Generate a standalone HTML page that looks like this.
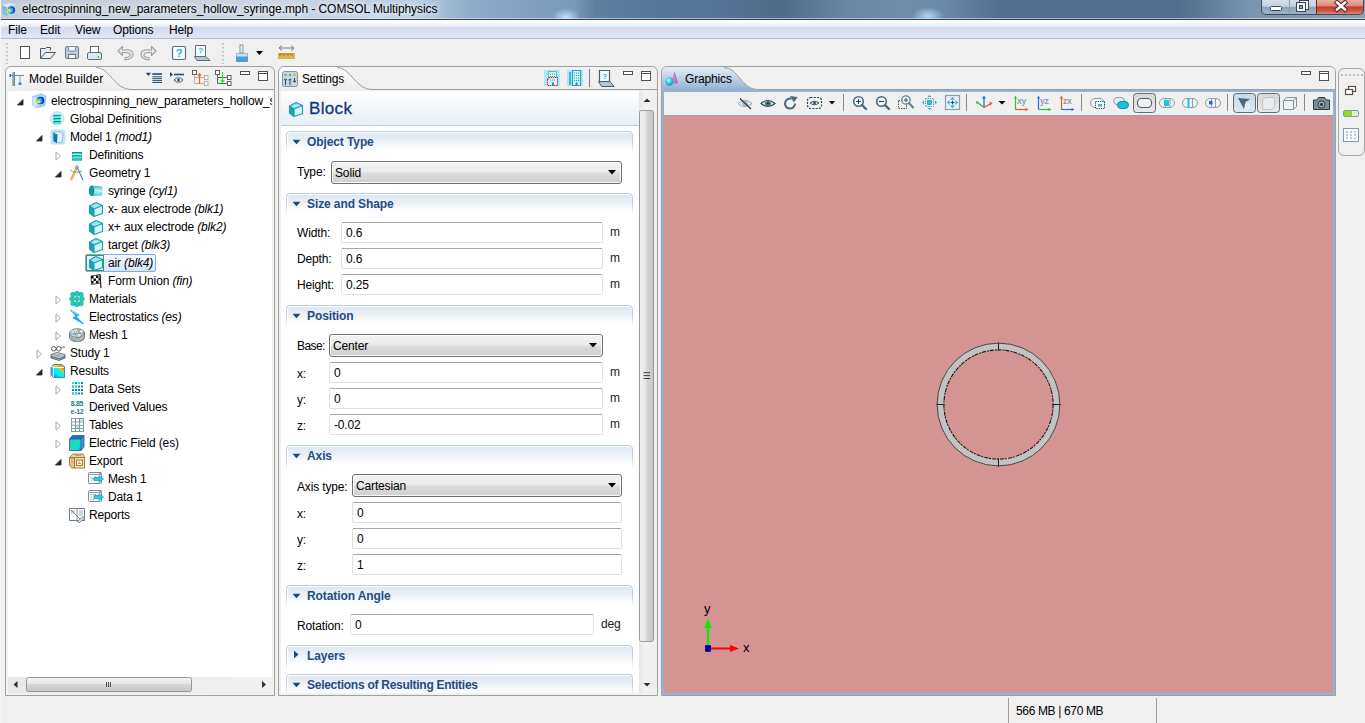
<!DOCTYPE html>
<html><head><meta charset="utf-8">
<style>
*{margin:0;padding:0;box-sizing:border-box}
html,body{width:1365px;height:723px;overflow:hidden;background:#f0f0f0;font-family:"Liberation Sans",sans-serif;font-size:12px;color:#000;line-height:1;letter-spacing:-0.15px}
.a{position:absolute}
svg{position:absolute;overflow:visible}
#title{left:0;top:0;width:1365px;height:19px;background:radial-gradient(14px 9px at 566px 17px,rgba(190,225,255,.95),rgba(190,225,255,0)),radial-gradient(16px 9px at 928px 16px,rgba(180,220,250,.9),rgba(180,220,250,0)),radial-gradient(30px 10px at 380px 18px,rgba(200,225,245,.6),rgba(200,225,245,0)),linear-gradient(90deg,#c0cad6 0,#c8d4e2 280px,#b8cbe0 420px,#8eaccb 470px,#7f9fc0 540px,#7898b8 575px,#5e80a2 595px,#56789a 650px,#55759a 720px,#4f6a88 780px,#6a88a6 850px,#6f8dab 900px,#6a8aaa 945px,#506e8e 1000px,#506e8e 1180px,#7a94ae 1250px,#8aa2ba 1365px)}
#titletext{left:22px;top:3px;font-size:12px;letter-spacing:-0.07px;color:#000;text-shadow:0 0 6px #fff,0 0 10px #fff}
#titleline{left:0;top:19px;width:1365px;height:1px;background:#3a4656}
#menubar{left:0;top:20px;width:1365px;height:19px;background:linear-gradient(#fff 0,#fbfcfe 12%,#eef1f8 28%,#e6eaf5 36%,#d5dbed 40%,#d8def0 60%,#e0e6f5 100%);border-bottom:1px solid #b6bccc}
.menu{top:4px;font-size:12px}
.wb{top:0;height:15px;border:1px solid #3e4b5c;border-top:none}
.panel{border:1px solid #a0a0a0;border-radius:6px 6px 0 0;background:#f0f0f0}
.content{background:#fff}
.tbsep{width:1px;background:#a8a8a8}
.grip{width:2px;background:repeating-linear-gradient(#c4c4c4 0 1px,#d8d8d8 1px 2px,transparent 2px 4px)}
.tr{white-space:nowrap}
i{font-style:italic}
.sec{left:286px;width:347px;height:24px;border:1px solid #b9cfe6;border-bottom:none;border-radius:4px 4px 0 0;box-shadow:inset 1px 1px 0 #fff;background:linear-gradient(#dde6f2,#fff 95%);-webkit-mask-image:linear-gradient(#000 40%,transparent)}
.sect{font-weight:bold;color:#1f4c85;white-space:nowrap}
.inp{height:21px;border:1px solid #dde2ea;border-top-color:#a6a8ac;border-radius:2px;background:#fff}
.inp span{position:absolute;left:4px;top:4px;white-space:nowrap}
.combo span{position:absolute;left:3px;top:5px;white-space:nowrap}
.combo{height:23px;border:1px solid #707070;border-radius:3px;box-shadow:inset 0 0 0 1px rgba(255,255,255,.85);background:linear-gradient(#f2f2f2 0,#ebebeb 48%,#dddddd 52%,#cfcfcf 100%)}
.unit{font-size:12px;color:#222;white-space:nowrap}
.status{top:705px;font-size:12px}
</style></head><body>

<svg width="0" height="0" style="position:absolute">
<defs>
 <linearGradient id="gCyan" x1="0" y1="0" x2="0" y2="1"><stop offset="0" stop-color="#dff7fb"/><stop offset="1" stop-color="#aee6ef"/></linearGradient>
 <linearGradient id="gBlue" x1="0" y1="0" x2="1" y2="1"><stop offset="0" stop-color="#1d8fd0"/><stop offset="1" stop-color="#0a5fa8"/></linearGradient>
 <linearGradient id="gRain" x1="0" y1="1" x2="1" y2="0"><stop offset="0" stop-color="#2a6ae0"/><stop offset="0.4" stop-color="#18c8e8"/><stop offset="0.7" stop-color="#f0d020"/><stop offset="1" stop-color="#e83010"/></linearGradient>
 <linearGradient id="gEF" x1="0" y1="0" x2="1" y2="1"><stop offset="0" stop-color="#10c8f0"/><stop offset="0.5" stop-color="#20e0b0"/><stop offset="0.75" stop-color="#10d8e0"/><stop offset="1" stop-color="#2080e0"/></linearGradient>
 <symbol id="i-blk" viewBox="0 0 16 16">
  <path d="M1.5 5 L8 1.5 L14.5 4.5 L6 8 Z" fill="#9fe6ee"/>
  <path d="M6 8 L14.5 4.5 V12.5 L6 15.5 Z" fill="#d6f7fa"/>
  <path d="M1.5 5 L6 8 V15.5 L1.5 12 Z" fill="#1aa3b4"/>
  <path d="M1.5 5 L8 1.5 L14.5 4.5 V12.5 L6 15.5 L1.5 12 Z M1.5 5 L6 8 L14.5 4.5 M6 8 V15.5" fill="none" stroke="#17a0b2" stroke-width="1.1" stroke-linejoin="round"/>
 </symbol>
 <symbol id="i-cyl" viewBox="0 0 16 16">
  <defs><linearGradient id="gCyl" x1="0" y1="0" x2="0" y2="1"><stop offset="0" stop-color="#22bccd"/><stop offset="0.5" stop-color="#c8f6fa"/><stop offset="1" stop-color="#3cc8d8"/></linearGradient></defs>
  <path d="M3.5 2.5 L14 3.5 Q15.5 7.5 14 12.5 L3.5 13 Z" fill="url(#gCyl)"/>
  <ellipse cx="3.6" cy="7.8" rx="2.8" ry="5.2" fill="#1296a8"/>
 </symbol>
 <symbol id="i-gdef" viewBox="0 0 16 16">
  <circle cx="7.2" cy="7.5" r="6.8" fill="#d2eef0" stroke="#b4dcdf" stroke-width="0.8"/>
  <g><rect x="3.5" y="3.8" width="7.5" height="2.3" fill="#0a8a80"/><rect x="4.3" y="4.8" width="6" height="1.3" fill="#10f4ec"/><rect x="10.3" y="4.8" width="0.8" height="1.3" fill="#fff"/></g>
  <g><rect x="3.5" y="6.9" width="7.5" height="2.3" fill="#0a8a80"/><rect x="4.3" y="7.9" width="6" height="1.3" fill="#10f4ec"/><rect x="10.3" y="7.9" width="0.8" height="1.3" fill="#fff"/></g>
  <g><rect x="3.5" y="10" width="7.5" height="2.3" fill="#0a8a80"/><rect x="4.3" y="11" width="6" height="1.3" fill="#10f4ec"/><rect x="10.3" y="11" width="0.8" height="1.3" fill="#fff"/></g>
 </symbol>
 <symbol id="i-defs" viewBox="0 0 16 16">
  <g><rect x="3" y="5" width="10" height="2.2" fill="#0a8a80"/><rect x="3.8" y="6" width="8.6" height="1.2" fill="#10f4ec"/></g>
  <g><rect x="3" y="8.2" width="10" height="2.2" fill="#0a8a80"/><rect x="3.8" y="9.2" width="8.6" height="1.2" fill="#10f4ec"/></g>
  <g><rect x="3" y="11.4" width="10" height="2.2" fill="#0a8a80"/><rect x="3.8" y="12.4" width="8.6" height="1.2" fill="#10f4ec"/></g>
 </symbol>
 <symbol id="i-model" viewBox="0 0 16 16">
  <rect x="0.5" y="0.5" width="15" height="15" rx="2" fill="#bfe6f8"/>
  <path d="M3 3.5 L9 2.5 L13 4.5 L12 13 L7 14 L3.5 12 Z" fill="#e6f4fb" stroke="#5aa0d0" stroke-width="0.6"/>
  <path d="M3 3.5 L7.5 5.5 L7 14 L3.5 12 Z" fill="url(#gBlue)"/>
 </symbol>
 <symbol id="i-mph" viewBox="0 0 16 16">
  <path d="M1.5 3.5 L10 1 L15 3 L14 12.5 L6 15 L1.5 12 Z" fill="#a8d4f0" stroke="#7ab0d8" stroke-width="0.6"/>
  <path d="M1.5 3.5 L6 5.5 L6 15 L1.5 12 Z" fill="#cfe6f6"/>
  <ellipse cx="9.5" cy="7.5" rx="3.8" ry="3.8" fill="#0c2bd0"/>
  <ellipse cx="8.6" cy="7.8" rx="2.8" ry="3" fill="#10b8e8"/>
  <ellipse cx="7.4" cy="8.4" rx="1.8" ry="1.9" fill="#d8e030"/>
 </symbol>
 <symbol id="i-geom" viewBox="0 0 16 16">
  <path d="M8 2 L14 15" stroke="#6a8a9a" stroke-width="1.3"/>
  <path d="M8 2 L2 15" stroke="#d8a030" stroke-width="2.2"/>
  <path d="M8 2 L2 15" stroke="#f2d080" stroke-width="0.8"/>
  <circle cx="8" cy="2.3" r="1.4" fill="none" stroke="#6a8a9a"/>
  <path d="M1 5 Q5 9 13 6" fill="none" stroke="#6a8a9a" stroke-width="0.8"/>
 </symbol>
 <symbol id="i-flag" viewBox="0 0 16 16">
  <path d="M3 3 L12 1.5 L12.5 10 L3.5 11.5 Z" fill="#fff" stroke="#222" stroke-width="0.8"/>
  <path d="M3 3 h2.5 v2.5 h-2.5z M8 2.5 h2.5 v2.5 h-2.5z M5.5 5.5 h2.5 v2.5 h-2.5z M10.5 5 h2 v2.5 h-2z M3.3 8 h2.2 v2.5 h-2.2z M8 7.8 h2.5 v2.5 h-2.5z" fill="#111"/>
  <path d="M12 1.5 L13 15" stroke="#222" stroke-width="1.2"/>
 </symbol>
 <symbol id="i-mat" viewBox="0 0 16 16">
  <g fill="#22c8d8" stroke="#0a9aaa" stroke-width="0.6">
  <circle cx="4" cy="3.5" r="2.3"/><circle cx="8" cy="2.5" r="2.3"/><circle cx="12" cy="3.5" r="2.3"/>
  <circle cx="3" cy="8" r="2.3"/><circle cx="8" cy="8" r="2.3"/><circle cx="13" cy="8" r="2.3"/>
  <circle cx="4" cy="12.5" r="2.3"/><circle cx="8" cy="13.5" r="2.3"/><circle cx="12" cy="12.5" r="2.3"/>
  </g>
  <g fill="#40e010"><circle cx="3" cy="5.5" r="1.1"/><circle cx="8" cy="5" r="1.1"/><circle cx="13" cy="5.5" r="1.1"/><circle cx="3" cy="10.5" r="1.1"/><circle cx="8" cy="10.5" r="1.1"/><circle cx="13" cy="10.5" r="1.1"/><circle cx="8" cy="15" r="1"/></g>
 </symbol>
 <symbol id="i-es" viewBox="0 0 16 16">
  <path d="M1.5 1 L10 6 L7 7.5 L14.5 15 L4 8.8 L7.2 7.2 Z" fill="#c8f4ff" stroke="#c8f4ff" stroke-width="2" opacity="0.6"/>
  <path d="M1.5 1 L10 6 L7 7.5 L14.5 15 L4 8.8 L7.2 7.2 Z" fill="#14a8f0" stroke="#14a8f0" stroke-width="0.8" stroke-linejoin="round"/>
  <path d="M2.5 1.8 L8.5 5.8" stroke="#a8e8ff" stroke-width="0.8"/>
 </symbol>
 <symbol id="i-mesh" viewBox="0 0 16 16">
  <path d="M0.5 6 V10 Q0.5 14.5 8 14.5 Q15.5 14.5 15.5 10 V6 Z" fill="#b4c0c4" stroke="#5a6e76" stroke-width="0.8"/>
  <ellipse cx="8" cy="6" rx="7.5" ry="4.3" fill="#e0e6e8" stroke="#5a6e76" stroke-width="0.8"/>
  <path d="M1.5 5 L5 8.5 L9 2.5 L12.5 9 L15 4.5 M4 2.5 L7.5 9.5 L11 2 M1 7 L15 6 M2 10 L5 14 L9 10.5 L12 14 L14.5 11" fill="none" stroke="#6a7e86" stroke-width="0.6"/>
 </symbol>
 <symbol id="i-study" viewBox="0 0 16 16">
  <circle cx="3.8" cy="3.8" r="2.3" fill="#fff" stroke="#3e525e" stroke-width="0.9"/>
  <circle cx="8.8" cy="3.8" r="2.3" fill="#fff" stroke="#3e525e" stroke-width="0.9"/>
  <path d="M6.1 3.8 H6.5 M11.1 3.3 Q12.5 1 15 2.2" fill="none" stroke="#3e525e" stroke-width="0.9"/>
  <path d="M1 9.5 L7 7.5 L15 9.5 L9 12 Z" fill="#e6ecee" stroke="#3e525e" stroke-width="0.8"/>
  <path d="M1 9.5 V11.5 L9 14 L15 11.5 V9.5 M1 11.5 V13 L9 15.5 L15 13 V11.5" fill="#aebcc2" stroke="#3e525e" stroke-width="0.8"/>
  <path d="M3 9.5 L9 11 M5 8.8 L11 10.3" stroke="#8a9aa2" stroke-width="0.5"/>
 </symbol>
 <symbol id="i-results" viewBox="0 0 16 16">
  <defs><linearGradient id="gRF" x1="0" y1="1" x2="1" y2="0"><stop offset="0" stop-color="#1a78f0"/><stop offset="0.35" stop-color="#00f0f0"/><stop offset="0.6" stop-color="#20e8e0"/><stop offset="0.8" stop-color="#f8c010"/><stop offset="1" stop-color="#f02010"/></linearGradient>
  <linearGradient id="gRT" x1="0" y1="0" x2="1" y2="0"><stop offset="0" stop-color="#f8f020"/><stop offset="1" stop-color="#f88010"/></linearGradient></defs>
  <path d="M1 4 L3.5 1.5 H12 L14.5 4 Z" fill="url(#gRT)"/>
  <path d="M1 4 L3.5 4.5 V14.5 L1 12 Z" fill="#20b8f0"/>
  <rect x="3.5" y="4.5" width="11" height="10" fill="url(#gRF)"/>
  <path d="M1 4 L3.5 1.5 H12 L14.5 4 V14.5 H3.5 L1 12 Z" fill="none" stroke="#2a90d8" stroke-width="1" stroke-linejoin="round"/>
  <path d="M1.5 3.5 L3.5 4.5 H14 M3.5 4.5 V14" fill="none" stroke="#fff" stroke-width="0.9"/>
 </symbol>
 <symbol id="i-datasets" viewBox="0 0 16 16">
  <g fill="#0a8aa8"><rect x="3" y="1" width="2" height="2"/><rect x="6" y="1" width="2" height="2"/><rect x="9" y="1" width="2" height="2"/><rect x="12" y="1" width="2" height="2"/>
  <rect x="3" y="4.5" width="2" height="2"/><rect x="6" y="4.5" width="2" height="2"/><rect x="9" y="4.5" width="2" height="2"/><rect x="12" y="4.5" width="2" height="2"/>
  <rect x="3" y="8" width="2" height="2"/><rect x="6" y="8" width="2" height="2"/><rect x="9" y="8" width="2" height="2"/><rect x="12" y="8" width="2" height="2"/>
  <rect x="3" y="11.5" width="2" height="2"/><rect x="6" y="11.5" width="2" height="2"/><rect x="9" y="11.5" width="2" height="2"/><rect x="12" y="11.5" width="2" height="2"/></g>
  <g fill="#19e8e8"><rect x="3" y="1" width="2" height="2"/><rect x="3" y="4.5" width="2" height="2"/><rect x="6" y="4.5" width="2" height="2"/><rect x="3" y="11.5" width="2" height="2"/><rect x="6" y="11.5" width="2" height="2"/><rect x="9" y="1" width="2" height="2"/></g>
 </symbol>
 <symbol id="i-derived" viewBox="0 0 16 16">
  <text x="8" y="6.8" font-size="7" font-weight="bold" fill="#10808a" text-anchor="middle" font-family="Liberation Sans" letter-spacing="-0.3">8.85</text>
  <text x="8" y="14.5" font-size="7" font-weight="bold" fill="#10808a" text-anchor="middle" font-family="Liberation Sans" letter-spacing="-0.3">e-12</text>
 </symbol>
 <symbol id="i-tables" viewBox="0 0 16 16">
  <rect x="2.5" y="1.5" width="12" height="13" fill="#fff" stroke="#8a9aa2"/>
  <path d="M2.5 5 H14.5 M2.5 8.3 H14.5 M2.5 11.5 H14.5 M6.5 1.5 V14.5 M10.5 1.5 V14.5" stroke="#8a9aa2"/>
  <rect x="11" y="2" width="3" height="2.5" fill="#a8e8f8"/><rect x="7" y="8.8" width="3" height="2.3" fill="#a8e8f8"/>
 </symbol>
 <symbol id="i-efield" viewBox="0 0 16 16">
  <path d="M0.5 4 L3.5 0.5 H15 L12 4 Z" fill="#1a6ae8"/>
  <path d="M12 4 L15 0.5 V12 L12 15.5 Z" fill="#3a9ad8"/>
  <path d="M0.5 4 H12 V15.5 H0.5 Z" fill="url(#gEF)"/>
  <path d="M0.5 4 L3.5 0.5 H15 V12 L12 15.5 H0.5 Z M0.5 4 H12 L15 0.5 M12 4 V15.5" fill="none" stroke="#3a5a78" stroke-width="0.8"/>
 </symbol>
 <symbol id="i-export" viewBox="0 0 16 16">
  <path d="M0.5 4.5 L4 1 H14 L15.5 4.5 Z" fill="#ecd6a6" stroke="#9a7630" stroke-width="0.9" stroke-linejoin="round"/>
  <path d="M0.5 4.5 H5.5 V15 H3 L0.5 12 Z" fill="#e4c68a" stroke="#9a7630" stroke-width="0.9" stroke-linejoin="round"/>
  <rect x="5.5" y="4.5" width="10" height="10.5" fill="#f2e0b8" stroke="#9a7630" stroke-width="0.9"/>
  <rect x="7.5" y="7" width="6" height="5.5" fill="#fff4dc" stroke="#9a7630" stroke-width="0.9"/>
  <path d="M9 10.5 H12 M9 9 H11" stroke="#9a7630" stroke-width="0.7"/>
  <path d="M2 6 L4 5.5 M2 9 L4 8.5 M6 2.5 L12 2.5" stroke="#9a7630" stroke-width="0.6"/>
 </symbol>
 <symbol id="i-expm" viewBox="0 0 16 16">
  <rect x="0.5" y="1.5" width="13" height="11" rx="1" fill="#f4f8fa" stroke="#6a8090" stroke-width="0.9"/>
  <path d="M0.5 3.5 H13.5" stroke="#8aa4b4" stroke-width="1"/>
  <circle cx="12" cy="2" r="0.9" fill="#f05030"/>
  <path d="M2 6 L5 8 L8 5 M2.5 10 L6 7.5" stroke="#8a9aa2" stroke-width="0.6" fill="none"/>
  <path d="M6 6.5 H11 V4.5 L15.5 8 L11 11.5 V9.5 H6 Z" fill="#22d0e0" stroke="#0a8aa0" stroke-width="0.6"/>
 </symbol>
 <symbol id="i-expd" viewBox="0 0 16 16">
  <rect x="0.5" y="1.5" width="13" height="11" rx="1" fill="#f4f8fa" stroke="#6a8090" stroke-width="0.9"/>
  <path d="M0.5 3.5 H13.5" stroke="#8aa4b4" stroke-width="1"/>
  <circle cx="12" cy="2" r="0.9" fill="#f05030"/>
  <path d="M2.5 5.5 h1 M2.5 8 h1 M2.5 10.5 h1" stroke="#60c020"/>
  <path d="M5 5.5 h1 M7 5.5 h1 M5 10.5 h1" stroke="#8a9aa2"/>
  <path d="M6 6.5 H11 V4.5 L15.5 8 L11 11.5 V9.5 H6 Z" fill="#22d0e0" stroke="#0a8aa0" stroke-width="0.6"/>
 </symbol>
 <symbol id="i-reports" viewBox="0 0 16 16">
  <path d="M0.5 1.5 H7.5 L8 2.5 L8.5 1.5 H15.5 V13.5 H8.5 L8 14.5 L7.5 13.5 H0.5 Z" fill="#fff" stroke="#5a7080" stroke-width="0.9"/>
  <path d="M8 2.5 V14" stroke="#5a7080" stroke-width="0.7"/>
  <path d="M10 4 H14 M10 6 H14 M10 8 H14 M2 4 H6 M2 6 H5" stroke="#7a8a92" stroke-width="0.7"/>
  <path d="M2 3 L12.5 13.5" stroke="#5a7080" stroke-width="0.8"/>
  <path d="M8.5 14.5 L14 9.5 L15.5 11 L10 16 Z" fill="#e8eef0" stroke="#5a7080" stroke-width="0.8"/>
 </symbol>
</defs>
</svg>
<!-- TITLE BAR -->
<div id="title" class="a"></div>
<svg style="left:1px;top:2px" width="16" height="15" viewBox="0 0 16 15">
 <path d="M1 3 L9.5 1 L15 2.5 L14 11.5 L6.5 14.5 L2 12 Z" fill="#b4d8f0"/>
 <path d="M1 3 L5.5 5 L6.5 14.5 L2 12 Z" fill="#7ab8e0"/>
 <path d="M1 3 L9.5 1 L15 2.5 L5.5 5 Z" fill="#d8ecf8"/>
 <ellipse cx="10.5" cy="8" rx="3.6" ry="3.8" fill="#1838d0"/>
 <ellipse cx="9.6" cy="8.2" rx="2.6" ry="2.9" fill="#10c0e8"/>
 <ellipse cx="8.4" cy="8.6" rx="1.6" ry="1.8" fill="#e8e040"/>
 <circle cx="5" cy="10" r="1.2" fill="#d8c840"/>
</svg>
<div id="titletext" class="a">electrospinning_new_parameters_hollow_syringe.mph - COMSOL Multiphysics</div>
<div class="a wb" style="left:1261px;width:29px;border-radius:0 0 0 5px;background:linear-gradient(#d5dfe9 0,#c3cfdc 45%,#8fa3b8 50%,#9fb2c6 100%)"></div>
<div class="a wb" style="left:1289px;width:28px;border-left-color:#8a9aab;background:linear-gradient(#d5dfe9 0,#c3cfdc 45%,#8fa3b8 50%,#9fb2c6 100%)"></div>
<div class="a wb" style="left:1316px;width:48px;border-radius:0 0 5px 0;border-left-color:#6a2a20;background:linear-gradient(#eab0a4 0,#dc8a78 40%,#c7402c 50%,#cf5a44 80%,#e08a74 100%)"></div>
<svg style="left:1261px;top:0" width="104" height="16" viewBox="0 0 104 16">
 <rect x="9.5" y="6.5" width="11" height="4" rx="1" fill="#fff" stroke="#3a4656" stroke-width="1"/>
 <rect x="38.5" y="0.5" width="9" height="9" fill="#f4f4f4" stroke="#3a4656"/>
 <rect x="35.5" y="2.5" width="9" height="9" fill="#f4f4f4" stroke="#3a4656"/>
 <rect x="38.5" y="5.5" width="3" height="3" fill="#8fa3b8" stroke="#3a4656"/>
 <path d="M76 2.5 L84 9.5 M84 2.5 L76 9.5" stroke="#4a2a2a" stroke-width="4.6" stroke-linecap="square"/>
 <path d="M76 2.5 L84 9.5 M84 2.5 L76 9.5" stroke="#fff" stroke-width="2.6" stroke-linecap="square"/>
</svg>
<div class="a" style="left:0;top:18px;width:1365px;height:1px;background:rgba(230,238,246,.55)"></div>
<div id="titleline" class="a"></div>

<!-- MENU BAR -->
<div id="menubar" class="a">
 <span class="a menu" style="left:8px">File</span>
 <span class="a menu" style="left:40px">Edit</span>
 <span class="a menu" style="left:75px">View</span>
 <span class="a menu" style="left:113px">Options</span>
 <span class="a menu" style="left:169px">Help</span>
</div>

<!-- MAIN TOOLBAR -->
<div class="a grip" style="left:6px;top:43px;height:21px"></div>
<svg style="left:0;top:39px" width="310" height="27" viewBox="0 0 310 27">
 <!-- new -->
 <rect x="20.5" y="7.5" width="9" height="12" fill="#fff" stroke="#555"/>
 <!-- open -->
 <path d="M40.5 19.5 V9.5 H45.5 L46.5 8.5 H50.5 V11.5" fill="#dfe9f5" stroke="#555"/>
 <path d="M40.5 19.5 L45.5 13.5 H55.5 L50.5 19.5 Z" fill="#eaf2fb" stroke="#555"/>
 <!-- save -->
 <rect x="65.5" y="7.5" width="13" height="12" rx="1.5" fill="#b4cfe6" stroke="#707878"/>
 <rect x="68.5" y="7.5" width="7" height="4.5" fill="#eef4fa" stroke="#8a9090"/>
 <rect x="68.5" y="15.5" width="7" height="4" fill="#f6f6f6" stroke="#707878"/>
 <!-- print -->
 <rect x="90.5" y="7.5" width="8" height="6" fill="#fff" stroke="#5a6e80"/>
 <rect x="87.5" y="13.5" width="14" height="7" rx="1.5" fill="#dfe8ef" stroke="#5a6e80"/>
 <circle cx="98.5" cy="18" r="0.9" fill="#2ec02e"/>
 <!-- undo -->
 <path d="M125 21 Q133.5 20 133 14.5 Q132 10 124.5 11 H122.5 V7.5 L118 12 L122.5 16.5 V13.5 H125 Q130 13.5 130 16 Q130 18.5 125 18.5 Z" fill="#e8e8e8" stroke="#a0a0a0" stroke-width="1.1" stroke-linejoin="round"/>
 <!-- redo -->
 <path d="M149 21 Q140.5 20 141 14.5 Q142 10 149.5 11 H151.5 V7.5 L156 12 L151.5 16.5 V13.5 H149 Q144 13.5 144 16 Q144 18.5 149 18.5 Z" fill="#e8e8e8" stroke="#a0a0a0" stroke-width="1.1" stroke-linejoin="round"/>
 <!-- help -->
 <rect x="172.5" y="7.5" width="13" height="13" rx="1.5" fill="#f6fafd" stroke="#5a6e80" stroke-width="1.2"/>
 <text x="179" y="18" font-size="11" font-weight="bold" fill="#10b8c8" text-anchor="middle" font-family="Liberation Sans">?</text>
 <!-- laptop help -->
 <path d="M195.5 6.5 H205.5 V17.5 H195.5 Z" fill="#f6fafd" stroke="#5a6e80"/>
 <text x="200.5" y="14" font-size="8" font-weight="bold" fill="#10b8c8" text-anchor="middle" font-family="Liberation Sans">?</text>
 <path d="M194.5 17.5 L197 21.5 H210 L206 17.5 Z" fill="#b8c4cc" stroke="#5a6e80"/>
 <!-- brush -->
 <rect x="240" y="6" width="3" height="8" fill="#e8eef2" stroke="#6a8090" stroke-width="0.8"/>
 <path d="M236.5 14.5 H247.5 V22.5 H236.5 Z" fill="#3aa2e8" stroke="#6a8090" stroke-width="0.8"/>
 <path d="M236.5 14.5 H247.5 V17.5 H236.5 Z" fill="#d0e2ee"/>
 <path d="M256 12 H263 L259.5 16 Z" fill="#000"/>
 <!-- ruler -->
 <path d="M279 9 H294 M279 9 L282 6.5 M279 9 L282 11.5 M294 9 L291 6.5 M294 9 L291 11.5" stroke="#6a8090" stroke-width="1" fill="none"/>
 <rect x="278" y="14" width="17" height="6" fill="#dbb64a"/>
 <path d="M280 14 V17 M282 14 V16 M284 14 V17 M286 14 V16 M288 14 V17 M290 14 V16 M292 14 V17" stroke="#8a6a20" stroke-width="0.8"/>
</svg>
<div class="a grip" style="left:222px;top:43px;height:21px"></div>

<!-- RIGHT TRIM STACK -->
<div class="a" style="left:1338px;top:68px;width:27px;height:88px;border:1px solid #a8a8a8;border-radius:6px;background:#f0f0f0"></div>
<div class="a" style="left:1341px;top:74px;width:22px;height:2px;background:repeating-linear-gradient(90deg,#c0c0c0 0 2px,transparent 2px 4px)"></div>
<svg style="left:1339px;top:68px" width="25" height="108" viewBox="0 0 25 108">
 <rect x="9.5" y="18.5" width="7" height="5" fill="#fff" stroke="#5a5048" stroke-width="1.2"/>
 <rect x="6.5" y="21.5" width="7" height="5" fill="#fff" stroke="#5a5048" stroke-width="1.2"/>
 <rect x="4.5" y="42.5" width="15" height="6" rx="1.5" fill="#e8f0f6" stroke="#7a98b0"/>
 <rect x="5" y="43" width="8" height="5" fill="#8ed200"/>
 <path d="M7 43 V48 M9 43 V48 M11 43 V48 M15 43 V48 M17 43 V48" stroke="#c8e880" stroke-width="0.5"/>
 <rect x="4.5" y="60.5" width="15" height="13" fill="#fff" stroke="#7a98b0"/>
 <path d="M7 64 H9 M11 64 H13 M15 64 H17 M7 67 H9 M11 67 H13 M15 67 H17 M7 70 H9 M11 70 H13 M15 70 H17" stroke="#7a98b0"/>
</svg>

<div class="a" style="left:0;top:0;width:1px;height:723px;background:#f4f7fa"></div>
<!-- STATUS BAR -->
<div class="a" style="left:1008px;top:698px;width:1px;height:25px;background:#a0a0a0"></div>
<div class="a" style="left:1156px;top:698px;width:1px;height:25px;background:#a0a0a0"></div>
<div class="a status" style="left:1016px;letter-spacing:-0.35px">566 MB | 670 MB</div>

<!-- PANELS -->
<!-- MODEL BUILDER -->
<div class="a" style="left:5px;top:66px;width:270px;height:630px;border:1px solid #a0a0a0;border-radius:6px 6px 0 0;background:#f0f0f0;overflow:hidden">
 <svg style="left:0;top:0" width="268" height="25" viewBox="0 0 268 25">
  <defs><linearGradient id="gTab" x1="0" y1="0" x2="0" y2="1"><stop offset="0" stop-color="#fdfdfd"/><stop offset="1" stop-color="#ececec"/></linearGradient></defs>
  <path d="M0 6 Q0 0 6 0 H90 C104 0 108 22 125 22.5 H268 V25 H0 Z" fill="url(#gTab)"/>
  <path d="M90 0.5 C104 0.5 108 22.5 125 22.5 H268" fill="none" stroke="#a0a0a0" stroke-width="1"/>
 </svg>
 <div class="a" style="left:2px;top:24px;width:264px;height:586px;background:#fff"></div>
</div>
<svg style="left:9px;top:71px" width="16" height="16" viewBox="0 0 16 16">
 <path d="M1 4.5 H15" stroke="#6a8898" stroke-width="1"/>
 <rect x="0.5" y="3" width="1.5" height="3" fill="#4a6878"/>
 <rect x="3.5" y="1" width="2.5" height="14" fill="#5a7a8c"/>
 <path d="M4.7 1 V15" stroke="#c8dce6" stroke-width="0.6"/>
 <path d="M11 4.5 V12" stroke="#8aa4b4" stroke-width="1"/>
 <rect x="9.5" y="11.5" width="3" height="2.5" fill="#1a8ae0"/>
</svg>
<div class="a" style="left:29px;top:73px;letter-spacing:0.08px">Model Builder</div>
<svg style="left:140px;top:66px" width="134" height="24" viewBox="0 0 134 24">
 <path d="M5.8 6.8 H11 L8.4 10 Z" fill="#1a4a7e"/>
 <path d="M12.3 8 H22" stroke="#1a4a7e" stroke-width="1.6"/>
 <path d="M12.3 10.8 H22 M12.3 12.7 H22 M12.3 14.6 H22 M12.3 16.5 H22" stroke="#2a5070" stroke-width="1"/>
 <path d="M30 6 L33 8.5 L30 11 Z" fill="#1a4a7e"/>
 <path d="M34 8.5 H44" stroke="#1a4a7e" stroke-width="1.6"/>
 <path d="M34 14 L36.5 12 H40.5 L43 14 L40.5 16 H36.5 Z" fill="#e8f0f4" stroke="#2a4a5a" stroke-width="0.9"/>
 <circle cx="38.5" cy="14" r="1.3" fill="#2a4a5a"/>
 <path d="M54.5 9 V17.5 H64 M54.5 11.5 H64" fill="none" stroke="#b4b4b4" stroke-width="1"/>
 <rect x="52.5" y="4.5" width="4" height="4" fill="#fff" stroke="#606060"/>
 <rect x="64.5" y="9.5" width="3.5" height="4" fill="#fff" stroke="#b4b4b4"/>
 <rect x="64.5" y="15.5" width="3.5" height="4" fill="#fff" stroke="#b4b4b4"/>
 <path d="M59.5 18 V8" stroke="#f86010" stroke-width="1.2"/><path d="M57.3 9.8 L59.5 6.8 L61.7 9.8 Z" fill="#f86010"/>
 <path d="M77.5 9 V17.5 H87 M77.5 11.5 H87" fill="none" stroke="#606060" stroke-width="1"/>
 <rect x="75.5" y="4.5" width="4" height="4" fill="#fff" stroke="#606060"/>
 <rect x="87.5" y="9.5" width="3.5" height="4" fill="#fff" stroke="#606060"/>
 <rect x="87.5" y="15.5" width="3.5" height="4" fill="#fff" stroke="#606060"/>
 <path d="M82.5 6 V16" stroke="#10f030" stroke-width="1.2"/><path d="M80.3 14.2 L82.5 17.2 L84.7 14.2 Z" fill="#10f030"/>
 <rect x="100.5" y="5.5" width="9" height="3" fill="#fff" stroke="#505050"/>
 <rect x="118.5" y="5.5" width="9" height="9" fill="#fff" stroke="#505050"/>
 <path d="M118.5 7.5 H127.5" stroke="#505050"/>
</svg>
<div class="a" style="left:8px;top:91px;width:264px;height:586px;overflow:hidden">
 <svg style="left:9px;top:8px" width="7" height="7" viewBox="0 0 7 7"><path d="M6 0.5 V6 H0.5 Z" fill="#262626" stroke="#262626" stroke-width="0.8" stroke-linejoin="round"/></svg>
 <svg style="left:23px;top:2px" width="16" height="16"><use href="#i-mph"/></svg>
 <div class="a tr" style="left:43px;top:4px">electrospinning_new_parameters_hollow_syringe</div>
 <svg style="left:42px;top:20px" width="16" height="16"><use href="#i-gdef"/></svg>
 <div class="a tr" style="left:62px;top:22px">Global Definitions</div>
 <svg style="left:28px;top:44px" width="7" height="7" viewBox="0 0 7 7"><path d="M6 0.5 V6 H0.5 Z" fill="#262626" stroke="#262626" stroke-width="0.8" stroke-linejoin="round"/></svg>
 <svg style="left:42px;top:38px" width="16" height="16"><use href="#i-model"/></svg>
 <div class="a tr" style="left:62px;top:40px">Model 1 <i>(mod1)</i></div>
 <svg style="left:47px;top:60px" width="7" height="10" viewBox="0 0 7 10"><path d="M1 1 L5.5 5 L1 9 Z" fill="#fff" stroke="#a6a6a6" stroke-width="1"/></svg>
 <svg style="left:61px;top:56px" width="16" height="16"><use href="#i-defs"/></svg>
 <div class="a tr" style="left:81px;top:58px">Definitions</div>
 <svg style="left:47px;top:80px" width="7" height="7" viewBox="0 0 7 7"><path d="M6 0.5 V6 H0.5 Z" fill="#262626" stroke="#262626" stroke-width="0.8" stroke-linejoin="round"/></svg>
 <svg style="left:61px;top:74px" width="16" height="16"><use href="#i-geom"/></svg>
 <div class="a tr" style="left:81px;top:76px">Geometry 1</div>
 <svg style="left:80px;top:92px" width="16" height="16"><use href="#i-cyl"/></svg>
 <div class="a tr" style="left:100px;top:94px">syringe <i>(cyl1)</i></div>
 <svg style="left:80px;top:110px" width="16" height="16"><use href="#i-blk"/></svg>
 <div class="a tr" style="left:100px;top:112px">x- aux electrode <i>(blk1)</i></div>
 <svg style="left:80px;top:128px" width="16" height="16"><use href="#i-blk"/></svg>
 <div class="a tr" style="left:100px;top:130px">x+ aux electrode <i>(blk2)</i></div>
 <svg style="left:80px;top:146px" width="16" height="16"><use href="#i-blk"/></svg>
 <div class="a tr" style="left:100px;top:148px">target <i>(blk3)</i></div>
 <div class="a" style="left:77px;top:163px;width:71px;height:18px;border:1px solid #84acdd;border-radius:2px;background:linear-gradient(#f2f8fe,#d5e6fa)"></div>
 <div class="a" style="left:78px;top:164px;width:18px;height:16px;border:1px solid #2aa04a"></div>
 <svg style="left:80px;top:164px" width="16" height="16"><use href="#i-blk"/></svg>
 <div class="a tr" style="left:100px;top:166px">air <i>(blk4)</i></div>
 <svg style="left:80px;top:182px" width="16" height="16"><use href="#i-flag"/></svg>
 <div class="a tr" style="left:100px;top:184px">Form Union <i>(fin)</i></div>
 <svg style="left:47px;top:204px" width="7" height="10" viewBox="0 0 7 10"><path d="M1 1 L5.5 5 L1 9 Z" fill="#fff" stroke="#a6a6a6" stroke-width="1"/></svg>
 <svg style="left:61px;top:200px" width="16" height="16"><use href="#i-mat"/></svg>
 <div class="a tr" style="left:81px;top:202px">Materials</div>
 <svg style="left:47px;top:222px" width="7" height="10" viewBox="0 0 7 10"><path d="M1 1 L5.5 5 L1 9 Z" fill="#fff" stroke="#a6a6a6" stroke-width="1"/></svg>
 <svg style="left:61px;top:218px" width="16" height="16"><use href="#i-es"/></svg>
 <div class="a tr" style="left:81px;top:220px">Electrostatics <i>(es)</i></div>
 <svg style="left:47px;top:240px" width="7" height="10" viewBox="0 0 7 10"><path d="M1 1 L5.5 5 L1 9 Z" fill="#fff" stroke="#a6a6a6" stroke-width="1"/></svg>
 <svg style="left:61px;top:236px" width="16" height="16"><use href="#i-mesh"/></svg>
 <div class="a tr" style="left:81px;top:238px">Mesh 1</div>
 <svg style="left:28px;top:258px" width="7" height="10" viewBox="0 0 7 10"><path d="M1 1 L5.5 5 L1 9 Z" fill="#fff" stroke="#a6a6a6" stroke-width="1"/></svg>
 <svg style="left:42px;top:254px" width="16" height="16"><use href="#i-study"/></svg>
 <div class="a tr" style="left:62px;top:256px">Study 1</div>
 <svg style="left:28px;top:278px" width="7" height="7" viewBox="0 0 7 7"><path d="M6 0.5 V6 H0.5 Z" fill="#262626" stroke="#262626" stroke-width="0.8" stroke-linejoin="round"/></svg>
 <svg style="left:42px;top:272px" width="16" height="16"><use href="#i-results"/></svg>
 <div class="a tr" style="left:62px;top:274px">Results</div>
 <svg style="left:47px;top:294px" width="7" height="10" viewBox="0 0 7 10"><path d="M1 1 L5.5 5 L1 9 Z" fill="#fff" stroke="#a6a6a6" stroke-width="1"/></svg>
 <svg style="left:61px;top:290px" width="16" height="16"><use href="#i-datasets"/></svg>
 <div class="a tr" style="left:81px;top:292px">Data Sets</div>
 <svg style="left:61px;top:308px" width="16" height="16"><use href="#i-derived"/></svg>
 <div class="a tr" style="left:81px;top:310px">Derived Values</div>
 <svg style="left:47px;top:330px" width="7" height="10" viewBox="0 0 7 10"><path d="M1 1 L5.5 5 L1 9 Z" fill="#fff" stroke="#a6a6a6" stroke-width="1"/></svg>
 <svg style="left:61px;top:326px" width="16" height="16"><use href="#i-tables"/></svg>
 <div class="a tr" style="left:81px;top:328px">Tables</div>
 <svg style="left:47px;top:348px" width="7" height="10" viewBox="0 0 7 10"><path d="M1 1 L5.5 5 L1 9 Z" fill="#fff" stroke="#a6a6a6" stroke-width="1"/></svg>
 <svg style="left:61px;top:344px" width="16" height="16"><use href="#i-efield"/></svg>
 <div class="a tr" style="left:81px;top:346px">Electric Field (es)</div>
 <svg style="left:47px;top:368px" width="7" height="7" viewBox="0 0 7 7"><path d="M6 0.5 V6 H0.5 Z" fill="#262626" stroke="#262626" stroke-width="0.8" stroke-linejoin="round"/></svg>
 <svg style="left:61px;top:362px" width="16" height="16"><use href="#i-export"/></svg>
 <div class="a tr" style="left:81px;top:364px">Export</div>
 <svg style="left:80px;top:380px" width="16" height="16"><use href="#i-expm"/></svg>
 <div class="a tr" style="left:100px;top:382px">Mesh 1</div>
 <svg style="left:80px;top:398px" width="16" height="16"><use href="#i-expd"/></svg>
 <div class="a tr" style="left:100px;top:400px">Data 1</div>
 <svg style="left:61px;top:416px" width="16" height="16"><use href="#i-reports"/></svg>
 <div class="a tr" style="left:81px;top:418px">Reports</div>
</div>
<!-- h scrollbar -->
<div class="a" style="left:8px;top:677px;width:264px;height:16px;background:linear-gradient(90deg,#e8e8e8,#f0f0f0)"></div>
<svg style="left:8px;top:677px" width="264" height="16" viewBox="0 0 264 16">
 <path d="M9.5 4 L5.5 7.5 L9.5 11 Z" fill="#303030"/>
 <path d="M254 4 L258 7.5 L254 11 Z" fill="#303030"/>
 <rect x="18.5" y="0.5" width="165" height="14" rx="2" fill="url(#gThumbH)" stroke="#979797"/>
 <path d="M98.5 5 V10 M100.5 5 V10 M102.5 5 V10" stroke="#404040" stroke-width="0.9"/>
 <defs><linearGradient id="gThumbH" x1="0" y1="0" x2="0" y2="1"><stop offset="0" stop-color="#f4f4f4"/><stop offset="0.42" stop-color="#e8e8e8"/><stop offset="0.48" stop-color="#d6d6d8"/><stop offset="1" stop-color="#c8c8cc"/></linearGradient></defs>
</svg>

<!-- SETTINGS -->
<div class="a" style="left:278px;top:66px;width:380px;height:630px;border:1px solid #a0a0a0;border-radius:6px 6px 0 0;background:#f0f0f0;overflow:hidden">
 <svg style="left:0;top:0" width="378" height="25" viewBox="0 0 378 25">
  <path d="M0 6 Q0 0 6 0 H58 C72 0 76 22 93 22.5 H378 V25 H0 Z" fill="url(#gTab)"/>
  <path d="M58 0.5 C72 0.5 76 22.5 93 22.5 H378" fill="none" stroke="#a0a0a0" stroke-width="1"/>
 </svg>
</div>
<svg style="left:282px;top:71px" width="16" height="16" viewBox="0 0 16 16">
 <rect x="0.5" y="0.5" width="15" height="15" rx="2" fill="#c8d6e2" stroke="#7e98ac"/>
 <circle cx="3.5" cy="4" r="1.1" fill="#22c022"/><circle cx="8" cy="4" r="1.1" fill="#22c022"/><circle cx="12.5" cy="4" r="1.1" fill="#f08a10"/>
 <path d="M2 9 Q3.5 7 5 9 M3.5 9 V14 M6.5 9 Q8 7 9.5 9 M8 9 V14 M11 10 Q12.5 12 14 10 M12.5 7 V11" fill="none" stroke="#2a4a60" stroke-width="1"/>
</svg>
<div class="a" style="left:302px;top:73px">Settings</div>
<svg style="left:540px;top:66px" width="118" height="24" viewBox="0 0 118 24">
 <rect x="4" y="4" width="16" height="16" fill="#a8eaf8"/>
 <path d="M8.5 5.5 H16.5 V19.5 H8.5 Z" fill="#d8f4fa" stroke="#3ab0c8" stroke-width="0.8"/>
 <path d="M10 8 h1 M12 8 h1 M14 8 h1 M10 10.5 h1 M12 10.5 h1 M14 10.5 h1" stroke="#2a8aa8"/>
 <path d="M7.5 13.5 L9.5 11.5 H17.5 V19.5 H7.5 Z" fill="#d8f4fa" stroke="#e01010" stroke-width="1.1" stroke-dasharray="1.2 0.9"/>
 <path d="M10 14 h1 M12 14 h1 M14 14 h1" stroke="#2a8aa8"/>
 <rect x="12" y="16.5" width="2" height="3" fill="#2a8aa8"/>
 <rect x="27" y="4" width="16" height="16" fill="#a8eaf8"/>
 <path d="M32.5 4.5 H40.5 V19.5 H32.5 Z" fill="#d8f4fa" stroke="#2aa0c0" stroke-width="1.2"/>
 <path d="M30 6 V19" stroke="#2aa0c0" stroke-width="1.5"/>
 <path d="M34 7 h1 M36 7 h1 M38 7 h1 M34 9.5 h1 M36 9.5 h1 M38 9.5 h1 M34 12 h1 M36 12 h1 M38 12 h1 M34 14.5 h1 M36 14.5 h1 M38 14.5 h1" stroke="#2a8aa8"/>
 <rect x="35.5" y="16.5" width="2" height="3" fill="#2a8aa8"/>
 <path d="M49.5 3 V21" stroke="#808080"/>
 <path d="M59.5 4.5 H69.5 V15.5 H59.5 Z" fill="#f6fafd" stroke="#4a6070" stroke-width="1.2"/>
 <text x="64.5" y="13" font-size="8" font-weight="bold" fill="#10b8c8" text-anchor="middle" font-family="Liberation Sans">?</text>
 <path d="M58.5 15.5 L61.5 20.5 H74 L70 15.5 Z" fill="#b8c4cc" stroke="#4a6070"/>
 <rect x="83.5" y="5.5" width="9" height="3" fill="#fff" stroke="#505050"/>
 <rect x="101.5" y="5.5" width="9" height="9" fill="#fff" stroke="#505050"/>
 <path d="M101.5 7.5 H110.5" stroke="#505050"/>
</svg>
<!-- content -->
<div class="a" style="left:281px;top:91px;width:358px;height:602px;background:#fff;overflow:hidden">
 <div class="a" style="left:0;top:0;width:358px;height:35px;background:linear-gradient(#fefeff,#e8eef6);border-bottom:1px solid #b9cde5"></div>
</div>
<svg style="left:287.5px;top:101px" width="16" height="16" viewBox="0 0 16 16"><use href="#i-blk"/></svg>
<div class="a" style="left:309px;top:100px;font-size:17px;color:#0f3a74;letter-spacing:0.35px;-webkit-text-stroke:0.3px #0f3a74">Block</div>
<div class="a sec" style="top:131px"></div>
<svg style="left:288px;top:131px" width="16" height="20" viewBox="0 0 16 20"><path d="M4.5 8.8 H12.5 L8.5 13.3 Z" fill="#1d4a82"/></svg>
<div class="a sect" style="left:307px;top:136px;letter-spacing:-0.1px">Object Type</div>
<div class="a" style="left:297px;top:166px">Type:</div>
<div class="a combo" style="left:331px;top:161px;width:291px"><span>Solid</span><svg style="right:5px;top:8px" width="8" height="5" viewBox="0 0 8 5"><path d="M0 0 H8 L4 4.5 Z" fill="#000"/></svg></div>
<div class="a sec" style="top:193px"></div>
<svg style="left:288px;top:193px" width="16" height="20" viewBox="0 0 16 20"><path d="M4.5 8.8 H12.5 L8.5 13.3 Z" fill="#1d4a82"/></svg>
<div class="a sect" style="left:307px;top:198px;letter-spacing:-0.1px">Size and Shape</div>
<div class="a" style="left:297px;top:227px">Width:</div>
<div class="a inp" style="left:341px;top:222px;width:262px"><span>0.6</span></div>
<div class="a unit" style="left:610px;top:226px">m</div>
<div class="a" style="left:297px;top:253px">Depth:</div>
<div class="a inp" style="left:341px;top:248px;width:262px"><span>0.6</span></div>
<div class="a unit" style="left:610px;top:252px">m</div>
<div class="a" style="left:297px;top:279px">Height:</div>
<div class="a inp" style="left:341px;top:274px;width:262px"><span>0.25</span></div>
<div class="a unit" style="left:610px;top:278px">m</div>
<div class="a sec" style="top:305px"></div>
<svg style="left:288px;top:305px" width="16" height="20" viewBox="0 0 16 20"><path d="M4.5 8.8 H12.5 L8.5 13.3 Z" fill="#1d4a82"/></svg>
<div class="a sect" style="left:307px;top:310px;letter-spacing:-0.1px">Position</div>
<div class="a" style="left:297px;top:340px;letter-spacing:-0.6px">Base:</div>
<div class="a combo" style="left:329px;top:334px;width:274px"><span>Center</span><svg style="right:5px;top:8px" width="8" height="5" viewBox="0 0 8 5"><path d="M0 0 H8 L4 4.5 Z" fill="#000"/></svg></div>
<div class="a" style="left:297px;top:368px">x:</div>
<div class="a inp" style="left:329px;top:362px;width:274px"><span>0</span></div>
<div class="a unit" style="left:610px;top:366px">m</div>
<div class="a" style="left:297px;top:394px">y:</div>
<div class="a inp" style="left:329px;top:388px;width:274px"><span>0</span></div>
<div class="a unit" style="left:610px;top:392px">m</div>
<div class="a" style="left:297px;top:420px">z:</div>
<div class="a inp" style="left:329px;top:414px;width:274px"><span>-0.02</span></div>
<div class="a unit" style="left:610px;top:418px">m</div>
<div class="a sec" style="top:445px"></div>
<svg style="left:288px;top:445px" width="16" height="20" viewBox="0 0 16 20"><path d="M4.5 8.8 H12.5 L8.5 13.3 Z" fill="#1d4a82"/></svg>
<div class="a sect" style="left:307px;top:450px;letter-spacing:-0.1px">Axis</div>
<div class="a" style="left:297px;top:481px">Axis type:</div>
<div class="a combo" style="left:352px;top:474px;width:270px"><span>Cartesian</span><svg style="right:5px;top:8px" width="8" height="5" viewBox="0 0 8 5"><path d="M0 0 H8 L4 4.5 Z" fill="#000"/></svg></div>
<div class="a" style="left:297px;top:508px">x:</div>
<div class="a inp" style="left:352px;top:502px;width:270px"><span>0</span></div>
<div class="a" style="left:297px;top:534px">y:</div>
<div class="a inp" style="left:352px;top:528px;width:270px"><span>0</span></div>
<div class="a" style="left:297px;top:560px">z:</div>
<div class="a inp" style="left:352px;top:554px;width:270px"><span>1</span></div>
<div class="a sec" style="top:585px"></div>
<svg style="left:288px;top:585px" width="16" height="20" viewBox="0 0 16 20"><path d="M4.5 8.8 H12.5 L8.5 13.3 Z" fill="#1d4a82"/></svg>
<div class="a sect" style="left:307px;top:590px;letter-spacing:-0.1px">Rotation Angle</div>
<div class="a" style="left:297px;top:620px">Rotation:</div>
<div class="a inp" style="left:350px;top:614px;width:244px"><span>0</span></div>
<div class="a unit" style="left:601px;top:618px">deg</div>
<div class="a sec" style="top:645px"></div>
<svg style="left:288px;top:645px" width="16" height="20" viewBox="0 0 16 20"><path d="M6 5.5 L10.5 9.5 L6 13.5 Z" fill="#1d4a82"/></svg>
<div class="a sect" style="left:307px;top:650px;letter-spacing:-0.1px">Layers</div>
<div class="a" style="left:281px;top:674px;width:358px;height:19px;overflow:hidden">
<div class="a sec" style="left:5px;top:0"></div>
<svg style="left:7px;top:0" width="16" height="20" viewBox="0 0 16 20"><path d="M4.5 8.8 H12.5 L8.5 13.3 Z" fill="#1d4a82"/></svg>
<div class="a sect" style="left:26px;top:5px;letter-spacing:-0.27px">Selections of Resulting Entities</div>
</div>
<div class="a" style="left:639px;top:91px;width:16px;height:602px;background:linear-gradient(90deg,#e6e6e6,#f2f2f2 40%,#eeeeee)"></div>
<svg style="left:639px;top:91px" width="16" height="602" viewBox="0 0 16 602">
 <defs><linearGradient id="gThumbV" x1="0" y1="0" x2="1" y2="0"><stop offset="0" stop-color="#f2f2f2"/><stop offset="0.45" stop-color="#e6e6e6"/><stop offset="0.5" stop-color="#d8d8da"/><stop offset="1" stop-color="#c4c4c8"/></linearGradient></defs>
 <path d="M4.5 11 L8 7.5 L11.5 11 Z" fill="#303030"/>
 <rect x="0.5" y="19.5" width="14" height="531" rx="2" fill="url(#gThumbV)" stroke="#9a9a9a"/>
 <path d="M4.5 281.7 H11 M4.5 284.6 H11 M4.5 287.5 H11" stroke="#404040" stroke-width="1"/>
 <path d="M4.5 592 L8 595.5 L11.5 592 Z" fill="#303030"/>
</svg>

<!-- GRAPHICS -->
<div class="a" style="left:661px;top:66px;width:675px;height:630px;border:1px solid #a0a0a0;border-radius:6px 6px 0 0;background:#f0f0f0;overflow:hidden">
 <svg style="left:0;top:0" width="673" height="26" viewBox="0 0 673 26">
  <defs><linearGradient id="gTabB" x1="0" y1="0" x2="0" y2="1"><stop offset="0" stop-color="#e6eef7"/><stop offset="0.85" stop-color="#97b3d3"/><stop offset="1" stop-color="#95b2d3"/></linearGradient></defs>
  <path d="M0 6 Q0 0 6 0 H62 C76 0 80 22 95 22.5 H673 V26 H0 Z" fill="url(#gTabB)"/>
  <path d="M62 0 C76 0 80 22 95 22.5 H673 V0 Z" fill="#f0f0f0"/>
  <path d="M62 0.5 C76 0.5 80 22.5 95 22.5 H673" fill="none" stroke="#a0a0a0" stroke-width="1"/>
  <rect x="0" y="23" width="673" height="3" fill="#95b3d3"/>
 </svg>
 <div class="a" style="left:0;top:25px;width:673px;height:603px;border:2px solid #95b3d3;border-top:none;background:#f0f0f0"></div>
 <div class="a" style="left:2px;top:48px;width:669px;height:1px;background:#a0a0a0"></div>
 <div class="a" style="left:2px;top:49px;width:669px;height:577px;background:#d59494"></div>
</div>
<svg style="left:664px;top:70px" width="18" height="18" viewBox="0 0 18 18">
 <defs><radialGradient id="gSph" cx="0.4" cy="0.35" r="0.7"><stop offset="0" stop-color="#c8f8ff"/><stop offset="0.5" stop-color="#30c8e8"/><stop offset="1" stop-color="#0890b8"/></radialGradient>
 <linearGradient id="gCone" x1="0" y1="0" x2="1" y2="0"><stop offset="0" stop-color="#e8a8e0"/><stop offset="1" stop-color="#a05aa0"/></linearGradient></defs>
 <path d="M10.5 1 L14 13 Q10.5 15 7 13 Z" fill="url(#gCone)"/>
 <circle cx="5.5" cy="11.5" r="4.2" fill="url(#gSph)"/>
</svg>
<div class="a" style="left:685px;top:73px">Graphics</div>
<svg style="left:1290px;top:66px" width="44" height="24" viewBox="0 0 44 24">
 <rect x="11.5" y="5.5" width="9" height="3" fill="#fff" stroke="#505050"/>
 <rect x="29.5" y="5.5" width="9" height="9" fill="#fff" stroke="#505050"/>
 <path d="M29.5 7.5 H38.5" stroke="#505050"/>
</svg>
<!-- graphics toolbar -->
<svg style="left:664px;top:92px" width="669" height="23" viewBox="664 92 669 23">
 <defs>
  <linearGradient id="gPress" x1="0" y1="0" x2="0" y2="1"><stop offset="0" stop-color="#d8d8d8"/><stop offset="1" stop-color="#e8e8e8"/></linearGradient>
  <linearGradient id="gPressB" x1="0" y1="0" x2="0" y2="1"><stop offset="0" stop-color="#c4d8ea"/><stop offset="1" stop-color="#dde9f4"/></linearGradient>
 </defs>
 <!-- hide eye -->
 <path d="M738 103.5 Q745 97 752 103.5 Q745 110 738 103.5 Z" fill="#e4ecf0" stroke="#8aa2b0" stroke-width="0.9"/>
 <ellipse cx="745" cy="103.5" rx="3" ry="2.5" fill="#a8bcc8"/>
 <path d="M740 98.5 L751 109" stroke="#2a3a44" stroke-width="1.2"/>
 <!-- eye -->
 <path d="M761 103.5 Q768 97.5 775 103.5 Q768 109.5 761 103.5 Z" fill="#e8eef2" stroke="#2a4450" stroke-width="1.1"/>
 <ellipse cx="768" cy="103.5" rx="3.2" ry="2.6" fill="#5a7480"/><circle cx="768" cy="103.3" r="1.1" fill="#1a2a30"/>
 <!-- refresh -->
 <path d="M795 103.5 A5 5 0 1 1 791.5 98.8" fill="none" stroke="#4a6a7c" stroke-width="2"/>
 <path d="M790 96 L797.5 97 L794 102.5 Z" fill="#4a6a7c"/>
 <!-- dashed eye -->
 <rect x="807.5" y="97.5" width="14" height="11" rx="3" fill="none" stroke="#2a4450" stroke-width="1.2" stroke-dasharray="2 1.3"/>
 <path d="M810 103 Q814.5 99.5 819 103 Q814.5 106.5 810 103 Z" fill="#e8eef2" stroke="#2a4450" stroke-width="0.9"/>
 <circle cx="814.5" cy="103" r="1.3" fill="#2a4450"/>
 <path d="M829 101 H835 L832 104.5 Z" fill="#000"/>
 <path d="M843.5 94 V111" stroke="#8a8a8a"/>
 <!-- zoom in -->
 <circle cx="858.5" cy="101.5" r="4.8" fill="#f4f8fa" stroke="#4a6a7c" stroke-width="1.6"/>
 <path d="M862 105 L866 109" stroke="#4a6a7c" stroke-width="2.4" stroke-linecap="round"/>
 <path d="M856 101.5 H861 M858.5 99 V104" stroke="#2a4450" stroke-width="1.1"/>
 <!-- zoom out -->
 <circle cx="881.5" cy="101.5" r="4.8" fill="#f4f8fa" stroke="#4a6a7c" stroke-width="1.6"/>
 <path d="M885 105 L889 109" stroke="#4a6a7c" stroke-width="2.4" stroke-linecap="round"/>
 <path d="M879 101.5 H884" stroke="#2a4450" stroke-width="1.1"/>
 <!-- zoom box -->
 <rect x="898.5" y="100.5" width="8" height="8" fill="none" stroke="#3a5a6a" stroke-dasharray="1.5 1"/>
 <circle cx="906" cy="100" r="4.2" fill="#f4f8fa" fill-opacity="0.7" stroke="#6a8494" stroke-width="1.3"/>
 <path d="M909 103 L913 107.5" stroke="#6a8494" stroke-width="2.2" stroke-linecap="round"/>
 <path d="M904 100 H908 M906 98 V102" stroke="#2a4450" stroke-width="0.9"/>
 <!-- zoom selected -->
 <rect x="925.5" y="98.5" width="8" height="8" fill="none" stroke="#5a8aa0" stroke-dasharray="1.2 1"/>
 <rect x="927.5" y="100.5" width="4" height="4" fill="#19c8e8" stroke="#0a8aa8" stroke-width="0.6"/>
 <path d="M929.5 95 L927.5 97 H931.5 Z M929.5 110 L927.5 108 H931.5 Z M922 102.5 L924 100.5 V104.5 Z M937 102.5 L935 100.5 V104.5 Z" fill="#19b8d8"/>
 <!-- zoom extents -->
 <rect x="945.5" y="95.5" width="14" height="14" fill="#e8f0f4" stroke="#8aa0ac" stroke-width="1.2"/>
 <path d="M952.5 97 L950 99.5 H955 Z M952.5 108 L950 105.5 H955 Z M947 102.5 L949.5 100 V105 Z M958 102.5 L955.5 100 V105 Z" fill="#19b8d8"/>
 <path d="M950.5 102.5 H954.5 M952.5 100.5 V104.5" stroke="#2a4450" stroke-width="1.1"/>
 <path d="M966.5 94 V111" stroke="#8a8a8a"/>
 <!-- axes -->
 <path d="M984 107.5 V97" stroke="#1a70e8" stroke-width="1.3"/><path d="M982 98.5 L984 95.5 L986 98.5 Z" fill="#1a70e8"/>
 <path d="M984 107.5 L977 102" stroke="#30c030" stroke-width="1.3"/><path d="M976 104 L976.5 100.5 L979 102.5 Z" fill="#30c030"/>
 <path d="M984 107.5 L991 103.5" stroke="#f05020" stroke-width="1.3"/><path d="M989 102 L992.5 102.8 L990.5 105.5 Z" fill="#f05020"/>
 <path d="M998.5 101 H1005.5 L1002 104.5 Z" fill="#000"/>
 <!-- xy yz zx -->
 <g font-family="Liberation Sans" font-size="8.5" fill="#8aa0b0" font-weight="bold">
  <text x="1017" y="104">xy</text><text x="1040" y="104">yz</text><text x="1063" y="104">zx</text>
 </g>
 <path d="M1015.5 109.5 V97" stroke="#30c030" stroke-width="1.2"/><path d="M1014 98.5 L1015.5 95.5 L1017 98.5 Z" fill="#30c030"/>
 <path d="M1015.5 109.5 H1027" stroke="#f05020" stroke-width="1.2"/><path d="M1025.5 108 L1028.5 109.5 L1025.5 111 Z" fill="#f05020"/>
 <path d="M1038.5 109.5 V97" stroke="#1a70e8" stroke-width="1.2"/><path d="M1037 98.5 L1038.5 95.5 L1040 98.5 Z" fill="#1a70e8"/>
 <path d="M1038.5 109.5 H1050" stroke="#30c030" stroke-width="1.2"/><path d="M1048.5 108 L1051.5 109.5 L1048.5 111 Z" fill="#30c030"/>
 <path d="M1061.5 109.5 V97" stroke="#f05020" stroke-width="1.2"/><path d="M1060 98.5 L1061.5 95.5 L1063 98.5 Z" fill="#f05020"/>
 <path d="M1061.5 109.5 H1073" stroke="#1a70e8" stroke-width="1.2"/><path d="M1071.5 108 L1074.5 109.5 L1071.5 111 Z" fill="#1a70e8"/>
 <path d="M1081.5 94 V111" stroke="#8a8a8a"/>
 <!-- select box -->
 <rect x="1090.5" y="98.5" width="14" height="9" rx="4.5" fill="#f0f4f6" stroke="#8aa0ac"/>
 <rect x="1095.5" y="101.5" width="9" height="7" fill="#fff" stroke="#2a4450" stroke-dasharray="1.3 1"/>
 <rect x="1098" y="104" width="4" height="2.5" fill="#19c8e8"/>
 <!-- two objects -->
 <rect x="1113.5" y="97.5" width="11" height="7" rx="3.5" fill="#e8f0f4" stroke="#8aa0ac"/>
 <rect x="1117.5" y="101.5" width="11" height="7" rx="3.5" fill="#19c0e0" stroke="#0a90b0"/>
 <!-- pressed: object -->
 <rect x="1133.5" y="93.5" width="22" height="19" rx="3" fill="url(#gPress)" stroke="#6a6a6a"/>
 <rect x="1137.5" y="98.5" width="14" height="9" rx="4" fill="#f0f4f6" stroke="#4a6270" stroke-width="1.1"/>
 <!-- domain -->
 <rect x="1159.5" y="98.5" width="15" height="9" rx="4.5" fill="#f0f4f6" stroke="#8aa0ac"/>
 <path d="M1165.5 98.5 V107.5 M1170 98.5 V107.5" stroke="#8aa0ac"/>
 <rect x="1164" y="100" width="5" height="6" fill="#19c8e8"/>
 <!-- boundary -->
 <rect x="1182.5" y="98.5" width="15" height="9" rx="4.5" fill="#f0f4f6" stroke="#8aa0ac"/>
 <path d="M1188.5 98.5 V107.5" stroke="#19c8e8" stroke-width="2"/>
 <path d="M1192.5 98.5 V107.5" stroke="#8aa0ac"/>
 <!-- point -->
 <rect x="1205.5" y="98.5" width="15" height="9" rx="4.5" fill="#f0f4f6" stroke="#8aa0ac"/>
 <path d="M1211.5 98.5 V107.5 M1215.5 98.5 V107.5" stroke="#8aa0ac"/>
 <rect x="1209" y="101" width="3.5" height="3.5" fill="#1a70e8"/>
 <path d="M1227.5 94 V111" stroke="#8a8a8a"/>
 <!-- pressed blue -->
 <rect x="1233.5" y="93.5" width="22" height="19" rx="3" fill="url(#gPressB)" stroke="#6a6a6a"/>
 <path d="M1238 98 L1250 99 L1245.5 102 L1244 109 Z" fill="#4a6878"/>
 <circle cx="1247.5" cy="106" r="2" fill="none" stroke="#fff" stroke-width="1"/>
 <!-- pressed gray -->
 <rect x="1257.5" y="93.5" width="22" height="19" rx="3" fill="url(#gPress)" stroke="#6a6a6a"/>
 <path d="M1262.5 100.5 L1265.5 97.5 H1274.5 V106.5 L1271.5 109.5 H1262.5 Z" fill="#e8eef0" stroke="#b8c4ca"/>
 <!-- wireframe -->
 <path d="M1283.5 100.5 L1286.5 97.5 H1296.5 V106.5 L1293.5 109.5 H1283.5 Z M1283.5 100.5 H1293.5 V109.5 M1293.5 100.5 L1296.5 97.5" fill="none" stroke="#7a98a8"/>
 <path d="M1304.5 94 V111" stroke="#8a8a8a"/>
 <!-- camera -->
 <path d="M1313.5 100 H1317 L1318.5 97.5 H1324.5 L1326 100 H1329.5 V109.5 H1313.5 Z" fill="#7a9098" stroke="#2a3a40"/>
 <circle cx="1321.5" cy="104.5" r="3.6" fill="#9ab0b8" stroke="#2a3a40"/>
 <circle cx="1321.5" cy="104.5" r="1.6" fill="#2a3a40"/>
</svg>
<!-- geometry circle -->
<svg style="left:930px;top:336px" width="137" height="137" viewBox="930 336 137 137">
 <circle cx="998.5" cy="404.5" r="58" fill="none" stroke="#c2c2c2" stroke-width="7"/>
 <circle cx="998.5" cy="404.5" r="61.4" fill="none" stroke="#3a3434" stroke-width="0.9"/>
 <circle cx="998.5" cy="404.5" r="54.6" fill="none" stroke="#1a1616" stroke-width="1.1" stroke-dasharray="4 1.2 2 0.8"/>
 <path d="M998.5 342.5 V350.5 M998.5 458.5 V466.5 M936.5 404.5 H944.5 M1052.5 404.5 H1060.5" stroke="#222" stroke-width="1"/>
</svg>
<!-- axis triad -->
<svg style="left:695px;top:600px" width="70" height="60" viewBox="695 600 70 60">
 <path d="M708 646 V626" stroke="#00f000" stroke-width="2"/>
 <path d="M704.5 628 L708 618.5 L711.5 628 Z" fill="#00f000"/>
 <path d="M710 648.5 H731" stroke="#ff0000" stroke-width="2"/>
 <path d="M730 645 L739 648.5 L730 652 Z" fill="#ff0000"/>
 <rect x="705" y="645.5" width="6" height="6" fill="#0000ff"/>
 <path d="M705.5 646 H710.5 L705.5 651 H710.5" fill="none" stroke="#000" stroke-width="1"/>
</svg>
<div class="a" style="left:704px;top:602px;font-size:13px;color:#000">y</div>
<div class="a" style="left:743px;top:641px;font-size:13px;color:#000">x</div>

</body></html>
